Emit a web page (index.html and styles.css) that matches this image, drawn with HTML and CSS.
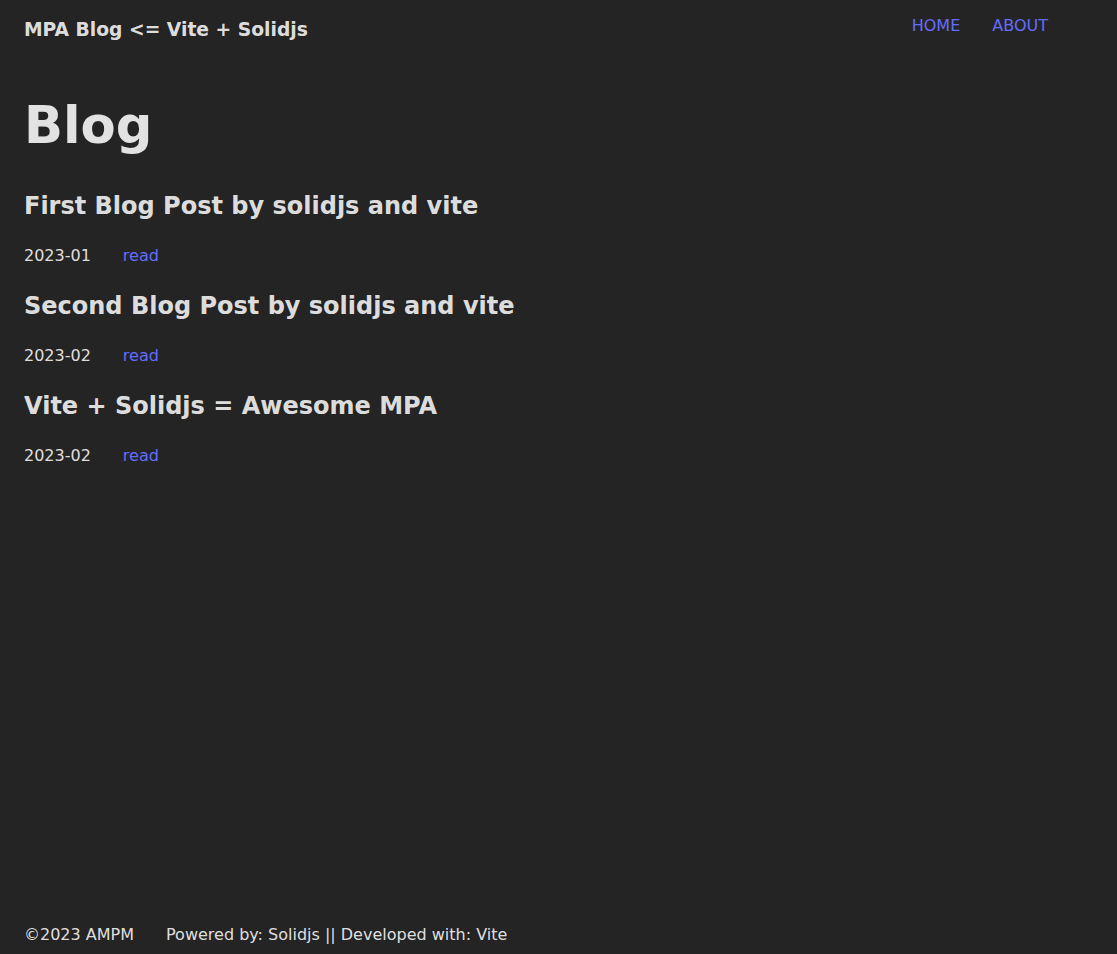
FILE: index.html
```html
<!DOCTYPE html>
<html lang="en">
<head>
<meta charset="utf-8">
<title>MPA Blog</title>
<link rel="stylesheet" href="styles.css">
</head>
<body>
<div class="app">
  <header class="header">
    <div class="brand">MPA Blog &lt;= Vite + Solidjs</div>
    <nav class="nav">
      <a href="#">HOME</a>
      <a href="#">ABOUT</a>
    </nav>
  </header>
  <main class="main">
    <h1 class="title">Blog</h1>
    <article class="post">
      <h2 class="post-title">First Blog Post by solidjs and vite</h2>
      <div class="meta"><span>2023-01</span><a href="#">read</a></div>
    </article>
    <article class="post">
      <h2 class="post-title">Second Blog Post by solidjs and vite</h2>
      <div class="meta"><span>2023-02</span><a href="#">read</a></div>
    </article>
    <article class="post">
      <h2 class="post-title">Vite + Solidjs = Awesome MPA</h2>
      <div class="meta"><span>2023-02</span><a href="#">read</a></div>
    </article>
  </main>
  <footer class="footer">
    <span>©2023 AMPM</span>
    <span>Powered by: Solidjs || Developed with: Vite</span>
  </footer>
</div>
</body>
</html>
```

FILE: styles.css
```css
html, body {
  margin: 0;
  padding: 0;
  background: #242424;
}
body {
  font-family: "DejaVu Sans", sans-serif;
  font-size: 16px;
  line-height: 1.5;
  color: rgba(255, 255, 255, 0.87);
}
a {
  color: #646cff;
  text-decoration: none;
}
.app {
  min-height: 100vh;
  display: flex;
  flex-direction: column;
  padding: 0 24px;
  box-sizing: border-box;
}
.header {
  display: flex;
  justify-content: space-between;
  align-items: flex-start;
  padding-top: 14px;
}
.brand {
  font-weight: bold;
  font-size: 18.72px;
  line-height: 32px;
}
.nav {
  display: flex;
  gap: 32px;
  padding-right: 45px;
  line-height: 24px;
}
.main {
  flex: 1;
}
.title {
  font-size: 51.2px;
  line-height: 1.1;
  margin: 51px 0 35px;
}
.post-title {
  font-size: 24px;
  line-height: 36px;
  margin: 0 0 20px;
}
.meta {
  display: flex;
  gap: 32px;
  margin-bottom: 20px;
}
.footer {
  display: flex;
  gap: 32px;
  padding-bottom: 7px;
}
```
